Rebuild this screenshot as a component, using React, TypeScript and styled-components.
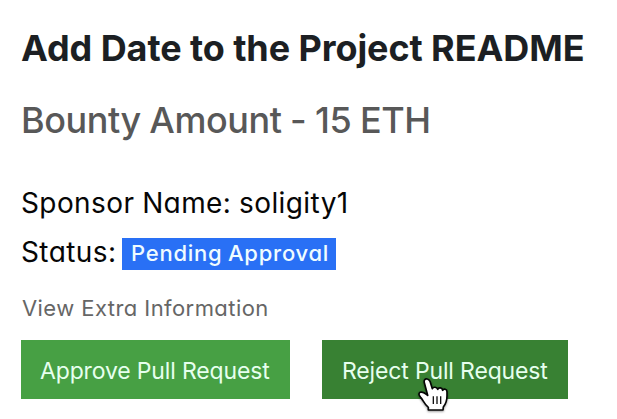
import React from "react";
import styled, { createGlobalStyle } from "styled-components";

const GlobalStyle = createGlobalStyle`
  * { box-sizing: border-box; }
  body { margin: 0; background: #fff; overflow: hidden; }
`;

const Card = styled.main`
  width: 617px;
  height: 419px;
  padding: 26px 0 0 21px;
  background: #fff;
  font-family: Inter, "Liberation Sans", sans-serif;
  white-space: nowrap;
  overflow: hidden;
`;

const Title = styled.h1`
  margin: 0;
  font-size: 36px;
  line-height: 44px;
  font-weight: 700;
  letter-spacing: -0.08px;
  color: #1c1f23;
`;

const Bounty = styled.h2`
  margin: 28px 0 0;
  font-size: 36px;
  line-height: 44px;
  font-weight: 450;
  letter-spacing: -0.45px;
  word-spacing: -0.5px;
  color: #585858;
`;

const Detail = styled.div<{ $gap: number }>`
  display: flex;
  align-items: center;
  height: 36px;
  margin-top: ${(p) => p.$gap}px;
  font-size: 28px;
  line-height: 36px;
  letter-spacing: 0.4px;
  word-spacing: -0.5px;
  font-feature-settings: "cv11";
  color: #060606;
`;

const Badge = styled.span`
  height: 32px;
  width: 214px;
  margin: 4px 0 0 auto;
  padding-left: 9px;
  background: #2970f5;
  color: #effcff;
  font-size: 22px;
  line-height: 31px;
  font-weight: 500;
  letter-spacing: 0.75px;
  word-spacing: -1px;
`;

const StatusRow = styled(Detail)`
  width: 315px;
`;

const ExtraLink = styled.a`
  display: block;
  margin-top: 23px;
  padding-left: 1px;
  font-size: 22px;
  line-height: 30px;
  letter-spacing: 0.43px;
  font-feature-settings: "cv11";
  color: #666;
`;

const Actions = styled.div`
  display: flex;
  gap: 32px;
  margin-top: 17px;
`;

const Button = styled.button<{ $width: number; $active?: boolean }>`
  position: relative;
  width: ${(p) => p.$width}px;
  height: 59px;
  padding: 3px 0 0 ${(p) => (p.$active ? 20 : 19)}px;
  border: 0;
  background: ${(p) => (p.$active ? "#388133" : "#47a044")};
  color: #e6ffee;
  font: 400 23px/56px Inter, "Liberation Sans", sans-serif;
  letter-spacing: -0.15px;
  text-align: left;
  cursor: pointer;
`;

const Pointer = styled.svg`
  position: absolute;
  left: 88px;
  top: 30px;
  width: 50px;
  height: 49px;
  filter: drop-shadow(0 1.5px 1px rgba(0, 0, 0, 0.4));
`;

export default function App() {
  return (
    <>
      <GlobalStyle />
      <Card>
        <Title>Add Date to the Project README</Title>
        <Bounty>Bounty Amount - 15 ETH</Bounty>
        <Detail $gap={43}>Sponsor Name: soligity1</Detail>
        <StatusRow $gap={13}>
          <span>Status:</span>
          <Badge>Pending Approval</Badge>
        </StatusRow>
        <ExtraLink>View Extra Information</ExtraLink>
        <Actions>
          <Button $width={269}>Approve Pull Request</Button>
          <Button $width={246} $active>
            Reject Pull Request
            <Pointer viewBox="0 0 150 147" aria-hidden="true">
              <path
                d="M52 27C45 25 41 31 43 38L53 76C46 70 37 64 30 67C24 71 28 77 32 82C40 91 43 103 55 112L55 120H99L100 111C108 101 111 92 111 78V65C111 57 101 55 98 61C97 52 86 51 83 58C81 50 69 50 67 56L60 34C58 30 56 28 52 27Z"
                fill="#fff"
                stroke="#050505"
                strokeWidth="5"
                strokeLinejoin="round"
              />
              <path d="M70 79v23M81 79v23M92 79v23" stroke="#111" strokeWidth="4" />
            </Pointer>
          </Button>
        </Actions>
      </Card>
    </>
  );
}
